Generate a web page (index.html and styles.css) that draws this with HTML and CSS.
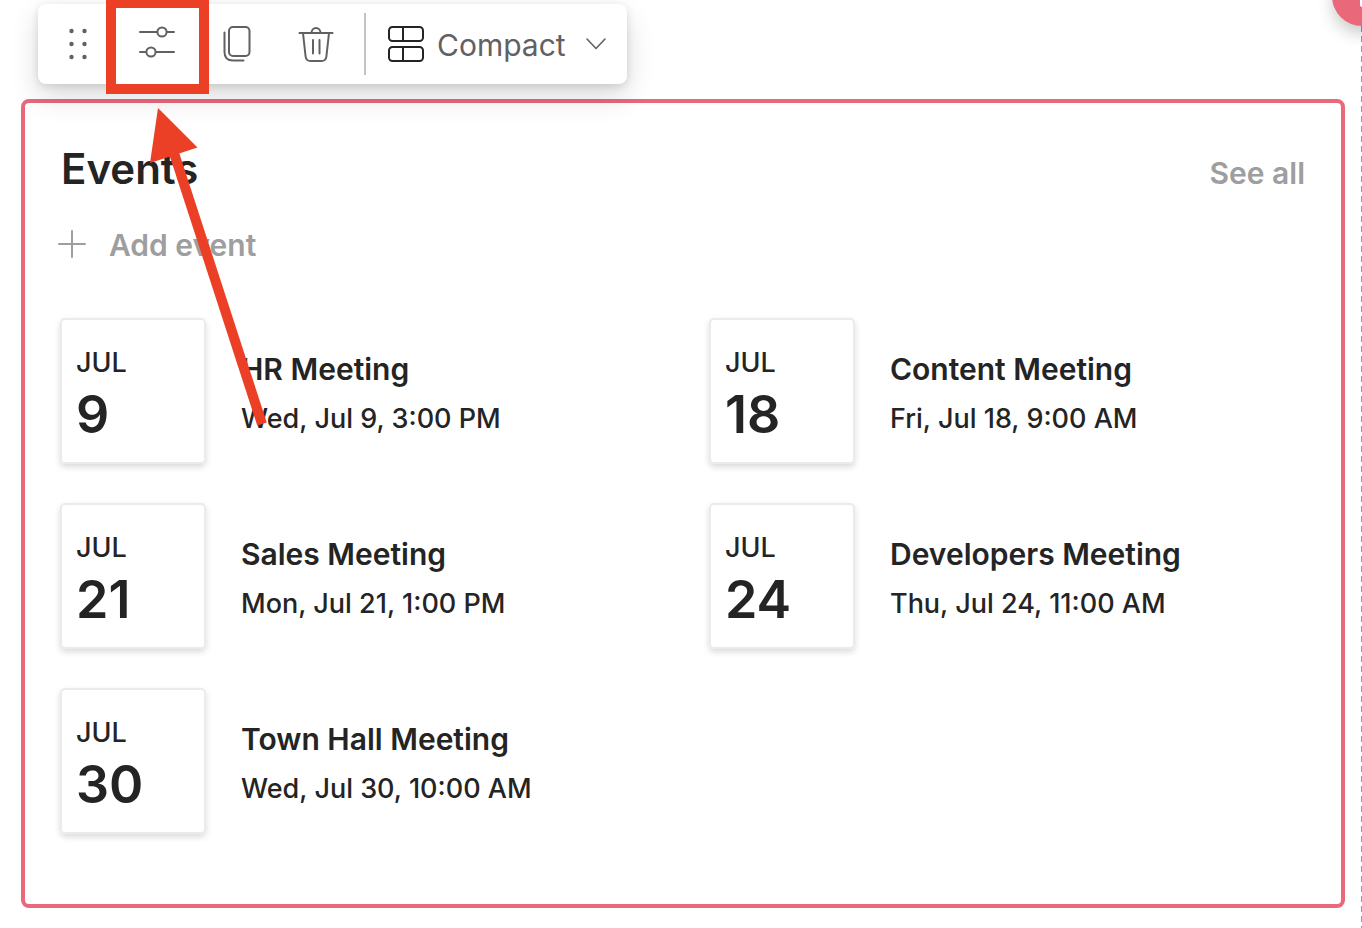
FILE: index.html
```
<!DOCTYPE html>
<html lang="en">
<head>
<title>Events</title>
<meta charset="UTF-8">
<meta name="viewport" content="width=device-width, initial-scale=1.0">
<link rel="stylesheet" href="styles.css">
</head>

<body>

<main class="canvas">

  <div class="toolbar">
    <button class="tool grip" aria-label="Move">
      <svg width="20" height="32" viewBox="0 0 20 32" fill="#616161">
        <circle cx="3.500" cy="3" r="2.2"/><circle cx="16.500" cy="3" r="2.2"/>
        <circle cx="3.500" cy="16" r="2.2"/><circle cx="16.500" cy="16" r="2.2"/>
        <circle cx="3.500" cy="29" r="2.2"/><circle cx="16.500" cy="29" r="2.2"/>
      </svg>
    </button>
    <button class="tool" aria-label="Edit properties">
      <svg width="36" height="40" viewBox="0 0 36 40" fill="none" stroke="#616161" stroke-width="2" stroke-linecap="round">
        <path d="M1 8h17M28 8h7M1 28h6M17 28h18"/>
        <circle cx="23" cy="8" r="4.600"/><circle cx="12" cy="28" r="4.600"/>
      </svg>
    </button>
    <button class="tool" aria-label="Duplicate">
      <svg width="30" height="36" viewBox="-2 0 30 36" fill="none" stroke="#616161" stroke-width="2" stroke-linecap="round" stroke-linejoin="round">
        <rect x="6" y="1" width="20.500" height="29" rx="4"/>
        <path d="M1.500 6.500V26q0 8.500 8.500 8.500h10.500"/>
      </svg>
    </button>
    <button class="tool" aria-label="Delete">
      <svg width="38" height="38" viewBox="-2 0 38 38" fill="none" stroke="#616161" stroke-width="2" stroke-linecap="round" stroke-linejoin="round">
        <path d="M1.500 8h33M13.500 8a4.500 5 0 0 1 9 0M5 8l2.600 23.500q.5 4.500 5 4.500h10.800q4.500 0 5-4.500l2.600-23.500M15 15v13.500M21.500 15v13.500"/>
      </svg>
    </button>
    <span class="divider"></span>
    <label class="layout">
      <svg width="36" height="36" viewBox="0 0 36 36" fill="none" stroke="#242424" stroke-width="2">
        <rect x="1" y="1" width="34" height="14" rx="3.500"/>
        <rect x="1" y="21" width="34" height="14" rx="3.500"/>
        <path d="M15 1v14M15 21v14"/>
      </svg>
      <select aria-label="Layout">
        <option>Compact</option>
      </select>
      <svg width="22" height="14" viewBox="0 0 22 14" fill="none" stroke="#616161" stroke-width="1.600" stroke-linecap="round" stroke-linejoin="round">
        <path d="M2 2l9 9.500L20 2"/>
      </svg>
    </label>
  </div>

  <section class="webpart">
    <header class="heading">
      <h2>Events</h2>
      <a href="#">See all</a>
    </header>

    <button class="add">
      <svg width="30" height="30" viewBox="0 0 30 30" stroke="#9e9e9e" stroke-width="2" stroke-linecap="round">
        <path d="M15 1v26M2 14h26"/>
      </svg>
      Add event
    </button>

    <div class="events">
      <article class="event">
        <div class="date"><span class="month">JUL</span><span class="day">9</span></div>
        <div class="info"><h3>HR Meeting</h3><p>Wed, Jul 9, 3:00 PM</p></div>
      </article>
      <article class="event">
        <div class="date"><span class="month">JUL</span><span class="day">18</span></div>
        <div class="info"><h3>Content Meeting</h3><p>Fri, Jul 18, 9:00 AM</p></div>
      </article>
      <article class="event">
        <div class="date"><span class="month">JUL</span><span class="day">21</span></div>
        <div class="info"><h3>Sales Meeting</h3><p>Mon, Jul 21, 1:00 PM</p></div>
      </article>
      <article class="event">
        <div class="date"><span class="month">JUL</span><span class="day">24</span></div>
        <div class="info"><h3>Developers Meeting</h3><p>Thu, Jul 24, 11:00 AM</p></div>
      </article>
      <article class="event">
        <div class="date"><span class="month">JUL</span><span class="day">30</span></div>
        <div class="info"><h3>Town Hall Meeting</h3><p>Wed, Jul 30, 10:00 AM</p></div>
      </article>
    </div>
  </section>

  <button class="add-section" aria-label="Add section">
    <svg width="22" height="22" viewBox="0 0 22 22" stroke="#fff" stroke-width="4" stroke-linecap="round">
      <path d="M11 2v18M2 11h18"/>
    </svg>
  </button>

  <!-- highlight box and arrow -->
  <svg class="callout" width="280" height="440" viewBox="0 0 280 440">
    <rect x="111" y="3" width="93" height="86" fill="none" stroke="#eb4026" stroke-width="10"/>
    <path d="M173 150L262 424" stroke="#eb4026" stroke-width="10"/>
    <path d="M158 108L197.500 147.500L150 163z" fill="#eb4026"/>
  </svg>

</main>

</body>
</html>
```

FILE: styles.css
```
* {
  box-sizing: border-box;
}

body {
  margin: 0;
  font-family: Inter, "Liberation Sans", sans-serif;
  color: #242424;
  background: #fff;
}

h2, h3, p {
  margin: 0;
}

button {
  border: none;
  background: none;
  padding: 0;
  font-family: inherit;
  cursor: pointer;
}

.canvas {
  position: relative;
  overflow: hidden;
  min-height: 100vh;
  padding: 4px 17px 20px 21px;
  /* dashed section edge */
  background: linear-gradient(#999 60%, transparent 60%) right 0 top 6px / 1px 10px repeat-y;
}

/* Toolbar */
.toolbar {
  position: relative;
  z-index: 1;
  display: flex;
  align-items: center;
  width: fit-content;
  height: 80px;
  margin: 0 0 15px 17px;
  padding-right: 20px;
  border-radius: 8px;
  background: #fff;
  box-shadow: 0 13px 29px rgba(0, 0, 0, 0.14), 0 2px 8px rgba(0, 0, 0, 0.12);
}

.tool {
  display: flex;
  align-items: center;
  justify-content: center;
  width: 79px;
  height: 80px;
}

.grip {
  cursor: move;
}

.divider {
  width: 2px;
  height: 62px;
  margin: 0 22px 0 10px;
  background: #c4c4c4;
}

.layout {
  display: flex;
  align-items: center;
}

.layout select {
  appearance: none;
  border: none;
  background: none;
  padding: 2px 19px 0 13px;
  font: 400 30px/40px Inter, "Liberation Sans", sans-serif;
  color: #616161;
}

/* Web part */
.webpart {
  padding: 40px 36px 70px 36px;
  border: 4px solid #e9687a;
  border-radius: 8px;
}

.heading {
  display: flex;
  align-items: baseline;
  justify-content: space-between;
  margin-bottom: 30px;
}

.heading h2 {
  font-size: 42px;
  line-height: 52px;
  font-weight: 600;
}

.heading a {
  font-size: 30px;
  line-height: 40px;
  font-weight: 600;
  color: #9e9e9e;
  text-decoration: none;
}

.add {
  display: flex;
  align-items: center;
  gap: 22px;
  margin: 0 0 53px -4px;
  font-size: 30px;
  line-height: 40px;
  font-weight: 600;
  color: #9e9e9e;
}

.events {
  display: grid;
  grid-template-columns: 1fr 1fr;
  gap: 39px 53px;
  margin-left: -1px;
}

.event {
  display: flex;
  gap: 35px;
}

.date {
  display: flex;
  flex-direction: column;
  width: 146px;
  height: 146px;
  padding: 24px 14px 0;
  border: 2px solid #ebebeb;
  border-radius: 5px;
  box-shadow: 0 3px 6px rgba(0, 0, 0, 0.15);
}

.month {
  font-size: 27px;
  line-height: 38px;
  font-weight: 500;
}

.day {
  font-size: 52px;
  line-height: 66px;
  font-weight: 600;
}

.info {
  display: flex;
  flex-direction: column;
  gap: 2px;
  padding-top: 27px;
}

.info h3 {
  font-size: 30px;
  line-height: 48px;
  font-weight: 600;
}

.info p {
  font-size: 27px;
  line-height: 48px;
  font-weight: 500;
}

/* Round button on the section edge */
.add-section {
  position: absolute;
  top: -34px;
  right: -30px;
  display: flex;
  align-items: center;
  justify-content: center;
  width: 60px;
  height: 60px;
  border-radius: 50%;
  background: #e9687a;
  box-shadow: 0 8px 16px rgba(0, 0, 0, 0.2);
}

.callout {
  position: absolute;
  top: 0;
  left: 0;
  z-index: 2;
  pointer-events: none;
}
```
